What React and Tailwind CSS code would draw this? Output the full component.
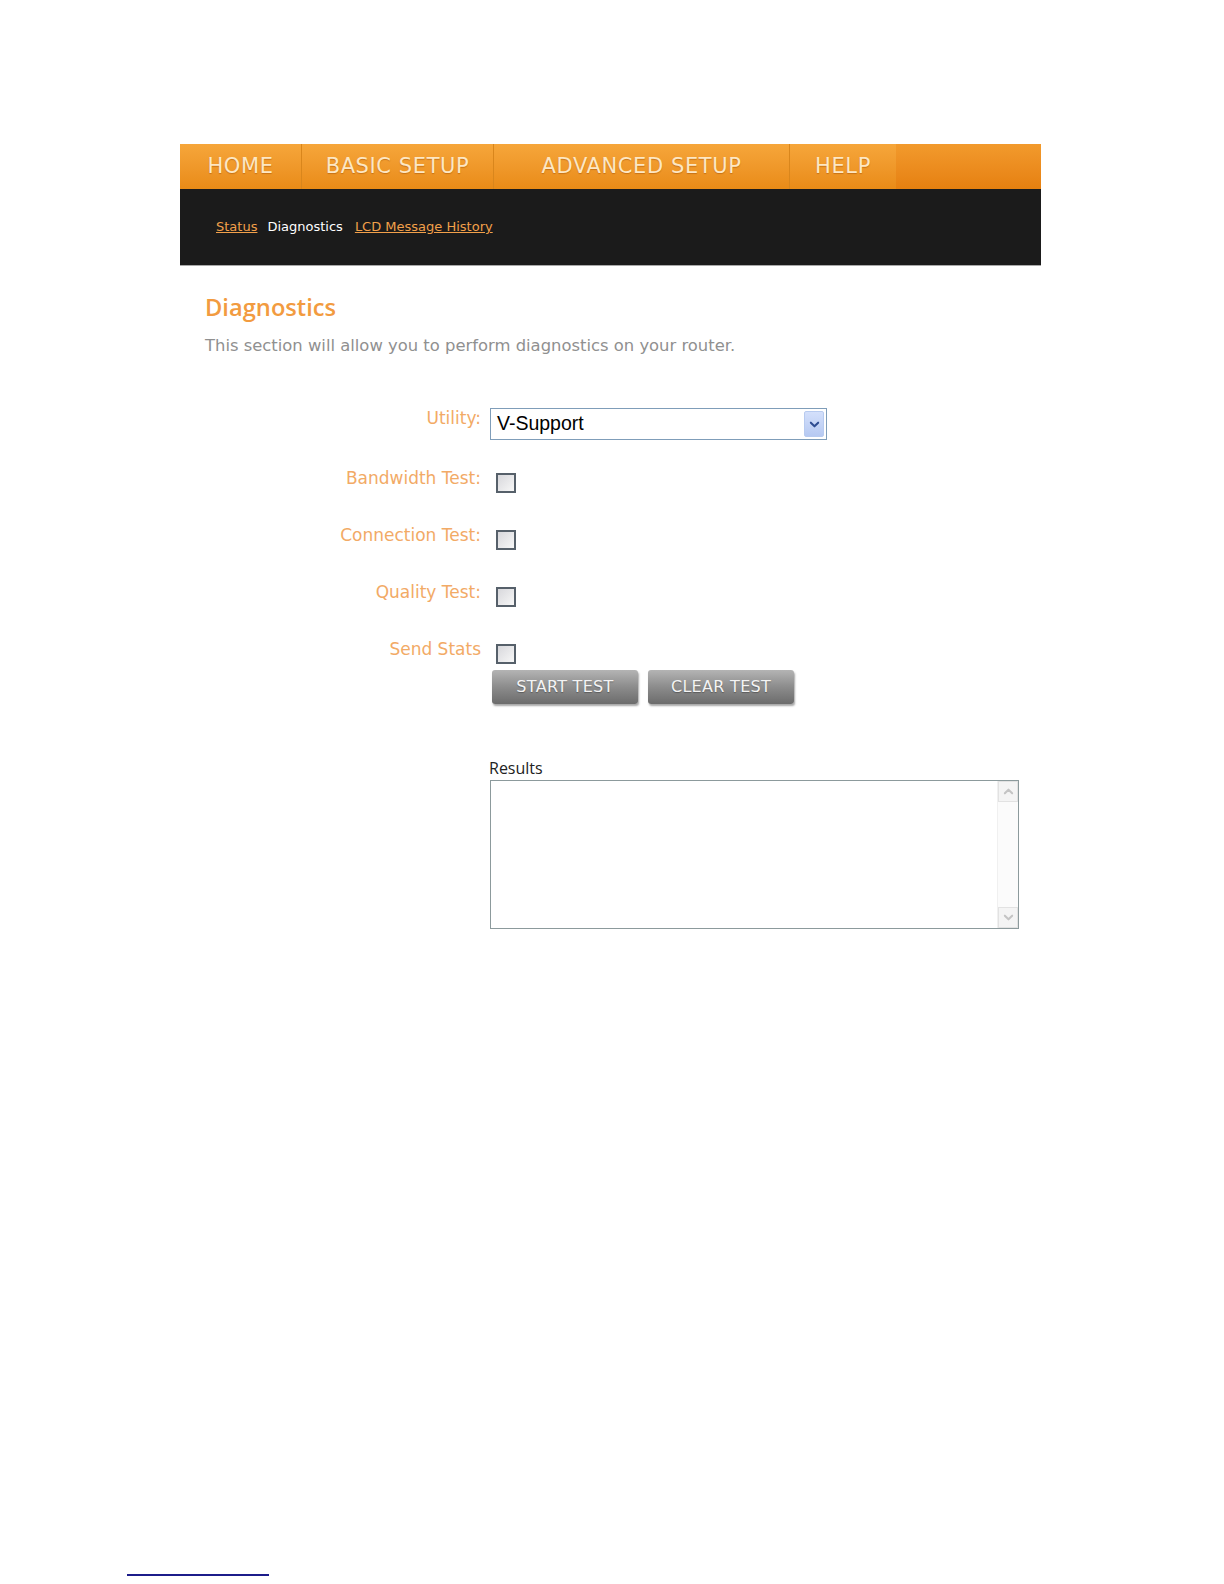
import React, { useState } from 'react'

const tabs = [
  { label: 'HOME', width: 'w-[121px]' },
  { label: 'BASIC SETUP', width: 'w-[192px]' },
  { label: 'ADVANCED SETUP', width: 'w-[296px]' },
  { label: 'HELP', width: 'w-[107px]' },
]

const checks = ['Bandwidth Test:', 'Connection Test:', 'Quality Test:', 'Send Stats']

function Chevron({ dir = 'down', className = '' }) {
  const d = dir === 'down' ? 'M2 4 L6 8 L10 4' : 'M2 8 L6 4 L10 8'
  return (
    <svg viewBox="0 0 12 12" className={className} fill="none">
      <path d={d} stroke="currentColor" strokeWidth="2.2" strokeLinecap="round" strokeLinejoin="round" />
    </svg>
  )
}

function Checkbox({ checked, onChange }) {
  return (
    <button
      type="button"
      onClick={onChange}
      className="mt-[5px] ml-[15px] w-[20px] h-[20px] border-2 border-[#56606a] bg-gradient-to-br from-[#d8d8dc] to-[#f7f7f7] flex items-center justify-center"
    >
      {checked && <span className="block w-[8px] h-[8px] bg-[#3b7a2a]" />}
    </button>
  )
}

function GrayButton({ children }) {
  return (
    <button
      type="button"
      className="w-[146px] h-[34px] rounded-[3px] bg-gradient-to-b from-[#b4b4b4] via-[#8c8c8c] to-[#6c6c6c] shadow-[1px_2px_2px_rgba(0,0,0,0.35)] text-[16px] text-[#f4f4f4] tracking-[0.3px] [text-shadow:0_1px_1px_rgba(0,0,0,0.3)]"
    >
      {children}
    </button>
  )
}

export default function App() {
  const [checked, setChecked] = useState([false, false, false, false])

  const toggle = (i) => {
    const next = [...checked]
    next[i] = !next[i]
    setChecked(next)
  }

  return (
    <div className="min-h-[1584px] bg-white font-['DejaVu_Sans',sans-serif] relative">
      <div className="ml-[180px] w-[861px] pt-[144px]">
        {/* top nav */}
        <div className="h-[45px] flex bg-gradient-to-b from-[#f29a2c] to-[#e6800f]">
          {tabs.map((t, i) => (
            <div
              key={t.label}
              className={`${t.width} h-full flex items-center justify-center bg-gradient-to-b from-[#f6a63a] to-[#e98b16] ${
                i > 0 ? 'border-l border-[#d9861c]' : ''
              }`}
            >
              <span className="text-[21px] tracking-[0.6px] text-[#fde7c4] [text-shadow:0_1px_1px_rgba(150,70,0,0.45)]">
                {t.label}
              </span>
            </div>
          ))}
        </div>

        {/* sub nav */}
        <div className="h-[77px] bg-[#1b1b1b] border-b border-[#a9a9a9] flex items-center pl-[36px] text-[13px]">
          <a href="#" className="text-[#f2a04a] underline">Status</a>
          <span className="ml-[10px] text-white">Diagnostics</span>
          <a href="#" className="ml-[12px] text-[#f2a04a] underline">LCD Message History</a>
        </div>

        <div className="pl-[25px]">
          <h1 className="mt-[26px] font-['Open_Sans',sans-serif] font-semibold text-[23.7px] leading-[30px] text-[#f29b40]">
            Diagnostics
          </h1>
          <p className="mt-[14px] text-[16.4px] leading-[20px] text-[#909090]">
            This section will allow you to perform diagnostics on your router.
          </p>
        </div>

        {/* form */}
        <div className="mt-[52px] text-[17px] text-[#f2aa66]">
          <div className="flex items-start">
            <div className="w-[301px] text-right leading-[20px]">Utility:</div>
            <div className="ml-[9px] w-[337px] h-[32px] border border-[#7f9db9] bg-white flex items-center justify-between pl-[6px] pr-[2px]">
              <span className="font-['Liberation_Sans',sans-serif] text-[19.5px] text-black">V-Support</span>
              <span className="w-[20px] h-[26px] rounded-[2px] border border-[#b8cbf0] bg-gradient-to-b from-[#d4e0fb] to-[#b6c9f2] flex items-center justify-center text-[#2f4d92]">
                <Chevron className="w-[11px] h-[11px]" />
              </span>
            </div>
          </div>

          <div className="mt-[28px] flex flex-col">
            {checks.map((c, i) => (
              <div key={c} className="h-[57px] flex items-start">
                <div className="w-[301px] text-right leading-[20px]">{c}</div>
                <Checkbox checked={checked[i]} onChange={() => toggle(i)} />
              </div>
            ))}
          </div>

          <div className="-mt-[26px] ml-[312px] flex gap-[10px]">
            <GrayButton>START TEST</GrayButton>
            <GrayButton>CLEAR TEST</GrayButton>
          </div>

          <div className="mt-[54px] ml-[309px]">
            <div className="text-[16px] leading-[20px] text-[#222] font-['Open_Sans',sans-serif]">Results</div>
            <div className="mt-[2px] ml-[1px] w-[529px] h-[149px] border-[1.5px] border-[#8c9a9c] bg-white flex">
              <div className="flex-1" />
              <div className="w-[21px] bg-[#fbfbfb] flex flex-col justify-between border-l border-[#f0f0f0]">
                <div className="h-[21px] border border-[#e2e2e2] bg-[#f4f4f4] flex items-center justify-center text-[#c4c4c4]">
                  <Chevron dir="up" className="w-[11px] h-[11px]" />
                </div>
                <div className="h-[21px] border border-[#e2e2e2] bg-[#f4f4f4] flex items-center justify-center text-[#c4c4c4]">
                  <Chevron className="w-[11px] h-[11px]" />
                </div>
              </div>
            </div>
          </div>
        </div>
      </div>

      <div className="absolute left-[127px] top-[1574px] w-[142px] h-[2px] bg-[#1c1c8a]" />
    </div>
  )
}
